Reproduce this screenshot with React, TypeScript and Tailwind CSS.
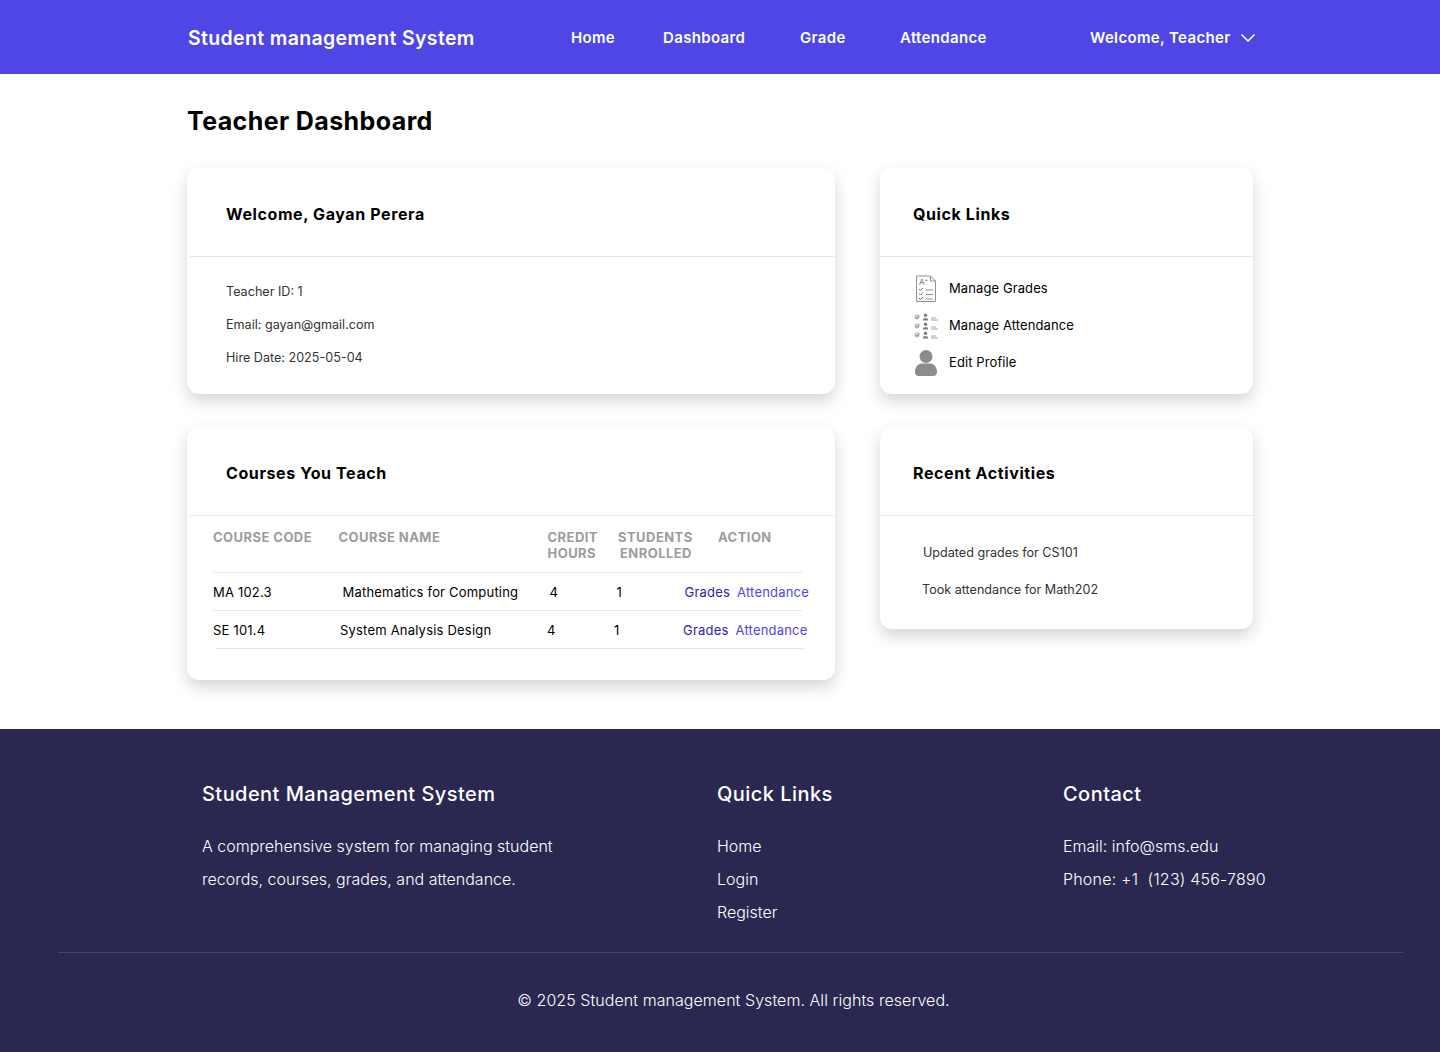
import { ChevronDown } from 'lucide-react';

function GradesIcon() {
    return (
        <svg width="22" height="28" viewBox="0 0 22 28" fill="none" stroke="#8f8f8f" strokeWidth="1">
            <path d="M1.500 1h14l5 5v20.500h-19z" />
            <path d="M15.500 1v5h5" />
            <text x="4" y="10" fontSize="8" fill="#666" stroke="none" fontFamily="Inter, sans-serif">A⁺</text>
            <path d="M4 14l1.500 1.500L8 13M4 18.500l1.500 1.500L8 17.500M4 23l1.500 1.500L8 22" stroke="#666" />
            <path d="M11 15h7M11 19.500h7M11 24h7" />
        </svg>
    );
}

function AttendanceIcon() {
    return (
        <svg width="25" height="26" viewBox="0 0 25 26" fill="none" className="-ml-[1px]">
            {[0, 9, 18].map((y) => (
                <g key={y}>
                    <circle cx="3" cy={y + 4} r="2" stroke="#888" strokeWidth="0.8" />
                    <path d={`M2 ${y + 4}l1 1 2-2.500`} stroke="#666" strokeWidth="0.8" />
                    <circle cx="11.500" cy={y + 2.200} r="1.700" fill="#7d7d7d" />
                    <path d={`M8.800 ${y + 7.500}c0-3.200 5.400-3.200 5.400 0z`} fill="#7d7d7d" />
                    <path d={`M17 ${y + 5}h5M17 ${y + 7}h7`} stroke="#999" strokeWidth="0.9" />
                </g>
            ))}
        </svg>
    );
}

function ProfileIcon() {
    return (
        <svg width="22" height="26" viewBox="0 0 22 26" fill="#8c8c8c">
            <circle cx="11" cy="6.500" r="6.500" />
            <path d="M0 22c0-6 4-8.500 7-8.500h8c3 0 7 2.500 7 8.500 0 3-2 4-4 4H4c-2 0-4-1-4-4z" />
        </svg>
    );
}

function Navbar() {
    return (
        <nav className="h-[74px] bg-[#4f46e5] text-white flex items-center font-semibold text-[15px] tracking-[0.35px] pt-[2px]">
            <span className="ml-[188px] w-[383px] text-[19.500px] tracking-[0.35px] pt-[2px]">Student management System</span>
            <a className="w-[92px]">Home</a>
            <a className="w-[137px]">Dashboard</a>
            <a className="w-[100px]">Grade</a>
            <a className="w-[190px]">Attendance</a>
            <span>Welcome, Teacher</span>
            <ChevronDown className="ml-[5px] w-6 h-6" strokeWidth={1.75} />
        </nav>
    );
}

function CardTitle({ children, pl }: { children: string; pl: string }) {
    return (
        <div className={`h-[89px] pt-[4px] flex items-center border-b border-[#e5e7eb] font-bold text-[16px] tracking-[0.6px] text-black ${pl}`}>
            {children}
        </div>
    );
}

const cardClass = 'bg-white rounded-xl shadow-[0_7px_16px_0_rgba(0,0,0,0.17)]';

function CoursesTable() {
    const headClass = 'text-[13px] font-bold text-[#9c9c9c] tracking-[0.45px] leading-[16px]';
    const gradeLink = 'text-[#2d23a8] shrink-0';
    const attendanceLink = 'ml-[7px] text-[#4f46e5] shrink-0';
    return (
        <div className="pl-[26px] pr-[26px] text-[13px] tracking-[0.2px]">
            <div className={`${headClass} h-[57px] flex items-start pt-[13px] border-b border-[#e5e7eb] mr-[7px]`}>
                <span className="w-[125.500px] shrink-0">COURSE CODE</span>
                <span className="w-[209px] shrink-0">COURSE NAME</span>
                <span className="w-[70.500px] shrink-0">CREDIT<br />HOURS</span>
                <span className="w-[100px] shrink-0">STUDENTS<br /><span className="ml-[2px]">ENROLLED</span></span>
                <span>ACTION</span>
            </div>
            <div className="h-[38px] pt-[2px] flex items-center border-b border-[#e5e7eb] mr-[7px] text-black whitespace-nowrap">
                <span className="w-[129.500px] shrink-0">MA 102.3</span>
                <span className="w-[207px] shrink-0">Mathematics for Computing</span>
                <span className="w-[67px] shrink-0">4</span>
                <span className="w-[68px] shrink-0">1</span>
                <a className={gradeLink}>Grades</a>
                <a className={attendanceLink}>Attendance</a>
            </div>
            <div className="h-[38px] pt-[2px] flex items-center border-b border-[#e5e7eb] ml-[2px] mr-[4px] text-black whitespace-nowrap">
                <span className="w-[127px] shrink-0 -ml-[2px]">SE 101.4</span>
                <span className="w-[207px] shrink-0">System Analysis Design</span>
                <span className="w-[67px] shrink-0">4</span>
                <span className="w-[69px] shrink-0">1</span>
                <a className={gradeLink}>Grades</a>
                <a className={attendanceLink}>Attendance</a>
            </div>
        </div>
    );
}

function Footer() {
    const headClass = 'text-[20px] font-medium tracking-[0.45px] leading-[28px] mb-[22px]';
    const lineClass = 'leading-[33px]';
    return (
        <footer className="h-[323px] bg-[#2a2850] text-white font-light text-[16px]">
            <div className="flex pt-[51px] h-[224px] border-b border-[#434274] ml-[58px] mr-[36px]">
                <div className="w-[659px] pl-[144px]">
                    <h3 className={headClass}>Student Management System</h3>
                    <p className={lineClass}>A comprehensive system for managing student<br />records, courses, grades, and attendance.</p>
                </div>
                <div className="w-[346px]">
                    <h3 className={headClass}>Quick Links</h3>
                    <p className={lineClass}>Home</p>
                    <p className={lineClass}>Login</p>
                    <p className={lineClass}>Register</p>
                </div>
                <div>
                    <h3 className={headClass}>Contact</h3>
                    <p className={lineClass}>Email: info@sms.edu</p>
                    <p className={lineClass + ' whitespace-pre tracking-[0.2px]'}>Phone: +1  (123) 456-7890</p>
                </div>
            </div>
            <p className="text-center pt-[35px] leading-[24px] pl-[27px] tracking-[0.05px]">© 2025 Student management System. All rights reserved.</p>
        </footer>
    );
}

export default function App() {
    return (
        <div className="min-h-[1052px] bg-white font-['Inter',sans-serif]">
            <Navbar />
            <main className="w-[1066px] ml-[187px] h-[655px]">
                <h1 className="text-[25px] font-bold text-black pt-[30px] leading-[34px] mb-[30px] tracking-[0.4px]">Teacher Dashboard</h1>
                <div className="grid grid-cols-[648px_373px] gap-x-[45px] gap-y-[33px] items-start">
                    <section className={`${cardClass} h-[226px]`}>
                        <div className="pl-[3px]"><CardTitle pl="pl-[36px]">Welcome, Gayan Perera</CardTitle></div>
                        <div className="pl-[39px] pt-[18px] text-[12.600px] text-[#333] leading-[33px]">
                            <p>Teacher ID: 1</p>
                            <p>Email: gayan@gmail.com</p>
                            <p>Hire Date: 2025-05-04</p>
                        </div>
                    </section>
                    <section className={`${cardClass} h-[226px]`}>
                        <CardTitle pl="pl-[33px]">Quick Links</CardTitle>
                        <ul className="pl-[35px] pt-[13px] text-[13px] text-black tracking-[0.1px]">
                            <li className="h-[37px] flex items-center"><span className="w-[34px]"><GradesIcon /></span>Manage Grades</li>
                            <li className="h-[37px] flex items-center"><span className="w-[34px]"><AttendanceIcon /></span>Manage Attendance</li>
                            <li className="h-[37px] flex items-center"><span className="w-[34px]"><ProfileIcon /></span>Edit Profile</li>
                        </ul>
                    </section>
                    <section className={`${cardClass} h-[253px]`}>
                        <div className="pl-[3px]"><CardTitle pl="pl-[36px]">Courses You Teach</CardTitle></div>
                        <CoursesTable />
                    </section>
                    <section className={`${cardClass} h-[202px]`}>
                        <CardTitle pl="pl-[33px]">Recent Activities</CardTitle>
                        <div className="pl-[42px] pt-[18px] text-[12.600px] text-[#333] leading-[37px]">
                            <p className="ml-[1px]">Updated grades for CS101</p>
                            <p>Took attendance for Math202</p>
                        </div>
                    </section>
                </div>
            </main>
            <Footer />
        </div>
    );
}
